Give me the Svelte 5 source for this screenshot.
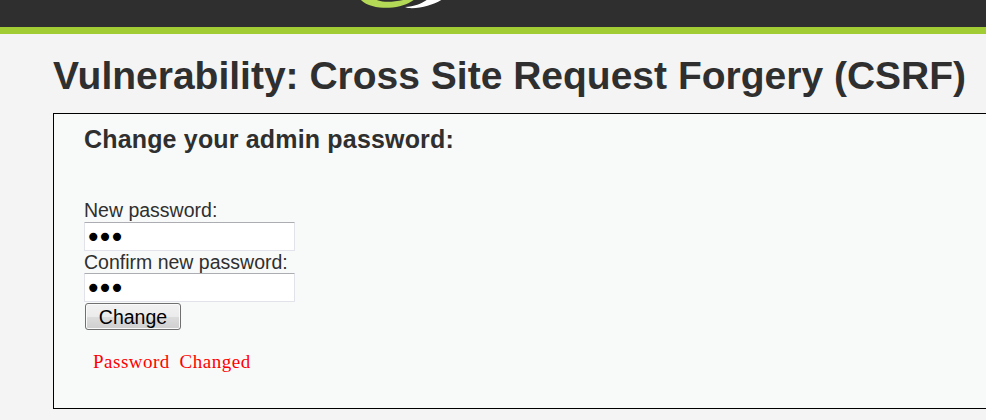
<script>
  let newPassword = $state('abc');
  let confirmPassword = $state('abc');
</script>

<div class="page">
  <header>
    <svg class="logo" width="140" height="27" viewBox="0 0 140 27" aria-hidden="true">
      <path d="M30 -1 C36 6 47 8 59 7.8 C70 7 79 4 85 -1 L77 -1 C69 1.4 61 2 55 1.7 C50 1.3 47 0.4 45 -1 Z" fill="#b3d957" />
      <path d="M75 7 C85 6.5 93 3 98 -1 L113 -1 C104 4.5 91 9 78 8 Z" fill="#fff" />
    </svg>
  </header>
  <main>
    <h1>Vulnerability: Cross Site Request Forgery (CSRF)</h1>
    <section>
      <h3>Change your admin password:</h3>
      <form onsubmit={(e) => e.preventDefault()}>
        <label for="new">New password:</label>
        <input id="new" type="password" bind:value={newPassword} />
        <label class="second" for="confirm">Confirm new password:</label>
        <input id="confirm" type="password" bind:value={confirmPassword} />
        <button>Change</button>
      </form>
      <p>Password Changed</p>
    </section>
  </main>
</div>

<style>
  .page {
    height: 420px;
    overflow: hidden;
    background: #f4f4f4;
    color: #2f2f2f;
    font-family: "Liberation Sans", Arial, sans-serif;
  }
  header {
    box-sizing: border-box;
    height: 34px;
    background: #2f2f2f;
    border-bottom: 7px solid #a1cc33;
  }
  .logo {
    display: block;
    margin-left: 330px;
  }
  main {
    padding-left: 53px;
  }
  h1 {
    margin: 0;
    padding-top: 19px;
    height: 60px;
    font-size: 39px;
    line-height: 45px;
    white-space: nowrap;
  }
  section {
    box-sizing: border-box;
    height: 296px;
    border: 1px solid #000;
    border-right: 0;
    background: #f8faf9;
    padding: 9px 0 0 30px;
  }
  h3 {
    margin: 0 0 44px;
    font-size: 25px;
    line-height: 32px;
    letter-spacing: 0.17px;
    white-space: nowrap;
  }
  form {
    display: flex;
    flex-direction: column;
    align-items: flex-start;
  }
  label {
    font-size: 19.5px;
    line-height: 23px;
    height: 23px;
    white-space: nowrap;
  }
  .second {
    height: 22px;
  }
  input {
    box-sizing: border-box;
    width: 211px;
    height: 29px;
    margin: 0;
    padding: 2px 0 0;
    border: 1px solid #e2e3ea;
    border-top-color: #abadb3;
    border-radius: 1px;
    background: #fff;
    color: #000;
    outline: 0;
    font: 28px/27px "DejaVu Sans", sans-serif;
    letter-spacing: -4.7px;
  }
  button {
    box-sizing: border-box;
    width: 96px;
    height: 27px;
    margin: 1px 0 0 1px;
    padding: 2px 0 0;
    border: 1px solid #707070;
    border-radius: 3px;
    box-shadow: inset 0 0 0 1px #fafafa;
    background: linear-gradient(#f2f2f2, #ebebeb 50%, #dddddd 50%, #cfcfcf);
    color: #000;
    font: 19.5px/23px "Liberation Sans", Arial, sans-serif;
  }
  p {
    margin: 20px 0 0 9px;
    color: #f00;
    font-family: "Liberation Serif", "Times New Roman", serif;
    font-size: 19px;
    line-height: 24px;
    letter-spacing: 0.5px;
    word-spacing: 4.5px;
    white-space: nowrap;
  }
</style>
